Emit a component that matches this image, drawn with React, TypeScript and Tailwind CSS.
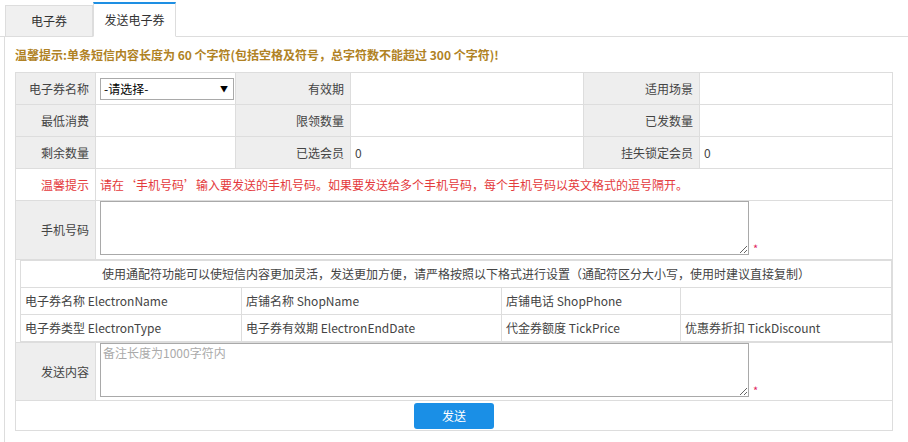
const font = "font-['Microsoft_YaHei','Noto_Sans_CJK_SC',sans-serif]"

const labelCls = "bg-[#eeeeee] text-right pr-[6px] text-[#444] border border-[#dddddd]"
const valueCls = "bg-white pl-[4px] text-[#444] border border-[#dddddd]"

const wildcards = [
	["电子券名称 ElectronName", "店铺名称 ShopName", "店铺电话 ShopPhone", ""],
	["电子券类型 ElectronType", "电子券有效期 ElectronEndDate", "代金券额度 TickPrice", "优惠券折扣 TickDiscount"],
]

function Tabs() {
	return (
		<div className="flex items-end h-[37px] pl-[5px] border-b border-[#dddddd]">
			<div className="w-[88px] h-[32px] -mb-px flex items-center justify-center bg-[#f0f0f0] border border-[#dddddd] text-[#333]">
				电子券
			</div>
			<div className="w-[83px] h-[35px] -mb-px flex items-center justify-center bg-white border border-[#dddddd] border-t-2 border-t-[#1e8fe3] border-b-white text-[#333]">
				发送电子券
			</div>
		</div>
	)
}

function Asterisk() {
	return <span className="text-[#e0245e] text-[11px] ml-[4px] self-end leading-none mb-[1px]">*</span>
}

export default function App() {
	return (
		<div className={`${font} text-[12px] w-[908px] h-[442px] bg-white overflow-hidden`}>
			<Tabs />
			<div className="ml-[4px] border-l border-[#dddddd] h-[405px] pl-[10px]">
				<p className="h-[35px] flex items-center font-bold text-[#b08224]">
					温馨提示:单条短信内容长度为 60 个字符(包括空格及符号，总字符数不能超过 300 个字符)!
				</p>
				<table className="w-[877px] border-collapse table-fixed">
					<colgroup>
						<col className="w-[80px]" />
						<col className="w-[140px]" />
						<col className="w-[115px]" />
						<col className="w-[233px]" />
						<col className="w-[116px]" />
						<col className="w-[193px]" />
					</colgroup>
					<tbody>
						<tr className="h-[32px]">
							<td className={labelCls}>电子券名称</td>
							<td className={valueCls}>
								<div className="w-[134px] h-[22px] border border-[#a9a9a9] flex items-center justify-between pl-[3px] pr-[5px] text-black">
									<span>-请选择-</span>
									<span className="text-[8px]">▼</span>
								</div>
							</td>
							<td className={labelCls}>有效期</td>
							<td className={valueCls}></td>
							<td className={labelCls}>适用场景</td>
							<td className={valueCls}></td>
						</tr>
						<tr className="h-[32px]">
							<td className={labelCls}>最低消费</td>
							<td className={valueCls}></td>
							<td className={labelCls}>限领数量</td>
							<td className={valueCls}></td>
							<td className={labelCls}>已发数量</td>
							<td className={valueCls}></td>
						</tr>
						<tr className="h-[32px]">
							<td className={labelCls}>剩余数量</td>
							<td className={valueCls}></td>
							<td className={labelCls}>已选会员</td>
							<td className={valueCls}>0</td>
							<td className={labelCls}>挂失锁定会员</td>
							<td className={valueCls}>0</td>
						</tr>
						<tr className="h-[32px]">
							<td className={`${labelCls} !text-[#e4393c] !bg-white`}>温馨提示</td>
							<td colSpan={5} className={`${valueCls} !text-[#e4393c]`}>
								请在‘手机号码’输入要发送的手机号码。如果要发送给多个手机号码，每个手机号码以英文格式的逗号隔开。
							</td>
						</tr>
						<tr className="h-[59px]">
							<td className={labelCls}>手机号码</td>
							<td colSpan={5} className="border border-[#dddddd] pl-[4px] pt-0 pb-[4px] align-top">
								<div className="flex">
									<textarea className="w-[649px] h-[54px] border border-[#a9a9a9] resize-y outline-none block" />
									<Asterisk />
								</div>
							</td>
						</tr>
						<tr>
							<td colSpan={6} className="border border-[#dddddd] pl-[4px] pr-0 py-0">
								<table className="w-full border-collapse table-fixed">
									<colgroup>
										<col className="w-[221px]" />
										<col className="w-[260px]" />
										<col className="w-[179px]" />
										<col />
									</colgroup>
									<tbody>
										<tr className="h-[27px]">
											<td colSpan={4} className="border border-[#dddddd] text-center text-[#444]">
												使用通配符功能可以使短信内容更加灵活，发送更加方便，请严格按照以下格式进行设置（通配符区分大小写，使用时建议直接复制）
											</td>
										</tr>
										{wildcards.map((row, i) => (
											<tr key={i} className="h-[27px]">
												{row.map((cell, j) => (
													<td key={j} className="border border-[#dddddd] pl-[4px] text-[#444]">
														{cell}
													</td>
												))}
											</tr>
										))}
									</tbody>
								</table>
							</td>
						</tr>
						<tr className="h-[58px]">
							<td className={labelCls}>发送内容</td>
							<td colSpan={5} className="border border-[#dddddd] pl-[4px] pt-0 pb-[3px] align-top">
								<div className="flex">
									<textarea
										placeholder="备注长度为1000字符内"
										className="w-[649px] h-[54px] border border-[#a9a9a9] resize-y outline-none block px-[2px] placeholder:text-[#aaaaaa]"
									/>
									<Asterisk />
								</div>
							</td>
						</tr>
						<tr className="h-[30px]">
							<td colSpan={6} className="border border-[#dddddd] text-center">
								<button className="w-[80px] h-[26px] rounded-[3px] bg-[#1a8fe6] text-white align-middle">
									发送
								</button>
							</td>
						</tr>
					</tbody>
				</table>
			</div>
		</div>
	)
}
